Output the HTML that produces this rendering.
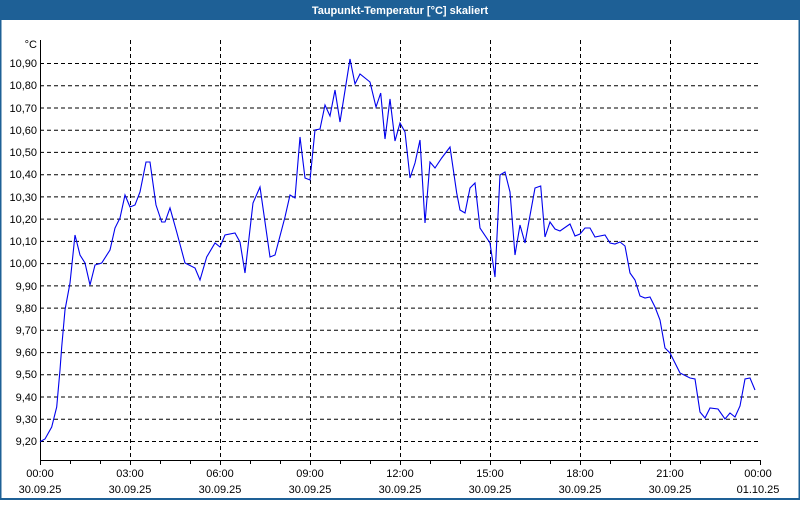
<!DOCTYPE html>
<html><head><meta charset="utf-8"><style>
html,body{margin:0;padding:0;background:#fff;}
body{width:800px;height:500px;overflow:hidden;}
</style></head><body>
<svg width="800" height="500" xmlns="http://www.w3.org/2000/svg" font-family="Liberation Sans, sans-serif">
<rect x="0" y="0" width="800" height="500" fill="#fff"/>
<rect x="0" y="0" width="800" height="20" fill="#1e6096"/>
<rect x="0" y="0" width="1.5" height="500" fill="#1e6096"/>
<rect x="798.5" y="0" width="1.5" height="500" fill="#1e6096"/>
<rect x="0" y="498" width="800" height="2" fill="#1e6096"/>
<text x="400" y="14" fill="#fff" font-size="11" font-weight="bold" text-anchor="middle">Taupunkt-Temperatur [°C] skaliert</text>
<g stroke="#000" stroke-width="1" stroke-dasharray="4,3" fill="none">
<path d="M40 63.5H760M40 85.7H760M40 108H760M40 130.2H760M40 152.4H760M40 174.7H760M40 196.9H760M40 219.1H760M40 241.4H760M40 263.6H760M40 285.9H760M40 308.1H760M40 330.3H760M40 352.6H760M40 374.8H760M40 397H760M40 419.3H760M40 441.5H760"/>
<path d="M130.5 40V460M220.5 40V460M310.5 40V460M400.5 40V460M490.5 40V460M580.5 40V460M670.5 40V460"/>
</g>
<path d="M40.5 40V460.5H760" stroke="#000" fill="none"/>
<path d="M40.5 460V465M70.5 460V464M100.5 460V464M130.5 460V465M160.5 460V464M190.5 460V464M220.5 460V465M250.5 460V464M280.5 460V464M310.5 460V465M340.5 460V464M370.5 460V464M400.5 460V465M430.5 460V464M460.5 460V464M490.5 460V465M520.5 460V464M550.5 460V464M580.5 460V465M610.5 460V464M640.5 460V464M670.5 460V465M700.5 460V464M730.5 460V464M760.5 460V465" stroke="#000"/>
<g font-size="11" fill="#000" text-anchor="end">
<text x="37" y="48">°C</text>
<text x="37" y="67">10,90</text><text x="37" y="89">10,80</text><text x="37" y="112">10,70</text><text x="37" y="134">10,60</text><text x="37" y="156">10,50</text><text x="37" y="178">10,40</text><text x="37" y="201">10,30</text><text x="37" y="223">10,20</text><text x="37" y="245">10,10</text><text x="37" y="267">10,00</text><text x="37" y="290">9,90</text><text x="37" y="312">9,80</text><text x="37" y="334">9,70</text><text x="37" y="356">9,60</text><text x="37" y="378">9,50</text><text x="37" y="401">9,40</text><text x="37" y="423">9,30</text><text x="37" y="445">9,20</text>
</g>
<g font-size="11" fill="#000" text-anchor="middle">
<text x="40" y="477">00:00</text><text x="40" y="493">30.09.25</text>
<text x="130" y="477">03:00</text><text x="130" y="493">30.09.25</text>
<text x="220" y="477">06:00</text><text x="220" y="493">30.09.25</text>
<text x="310" y="477">09:00</text><text x="310" y="493">30.09.25</text>
<text x="400" y="477">12:00</text><text x="400" y="493">30.09.25</text>
<text x="490" y="477">15:00</text><text x="490" y="493">30.09.25</text>
<text x="580" y="477">18:00</text><text x="580" y="493">30.09.25</text>
<text x="670" y="477">21:00</text><text x="670" y="493">30.09.25</text>
<text x="758" y="477">00:00</text><text x="758" y="493">01.10.25</text>
</g>
<polyline fill="none" stroke="#0000ee" stroke-width="1.1" points="40,441.7 45,439 51.7,427 56.7,407 60,370 61.7,347 65,310 70,283 75,235 80,255 85,263 90,285 95,265 101.7,263 110,250 115,228 120,218 125,195 130,207 135,205 140,192 146,162 150,162 156,205 161.7,222 165,222 170,208 176.7,232 185,263 195,268 200,280 206.7,257 215,243 220,247 225,235 235,233 240,242 245,273 253,203 260,187 270,257 275,255 285,217 290,195 295,198 300,137 305,178 310,180 315,130 320,129 325,105 330,116 335,90 340,122 350,59 355,84 360,74 370,82 376,107 380.7,93 385,139 390,99 395,141 400,123 405,132 410,178 415,163 420,140 425,223 430,162 435,168 441.7,158 450,147 456.7,193 460,210 465,213 470,188 475,183 480,228 490,243 495,277 500,175 505,172 510,192 515,255 520,225 525,243 535,188 540.7,186 545,237 550,222 555,229 560,231 570,224 575,236 580,234 585,228 590,228 595,237 605,235 610,243 615,244 620,242 625,246 630,273 635,280 640,296 645,298 650,297 655,307 660,320 665,348 670,353 680,373 690,378 695,379 700,412 705,418 710,408 718,409 725,419 730,413 735,417 740,406 745,379 750,378 755,390"/>
</svg>
</body></html>
